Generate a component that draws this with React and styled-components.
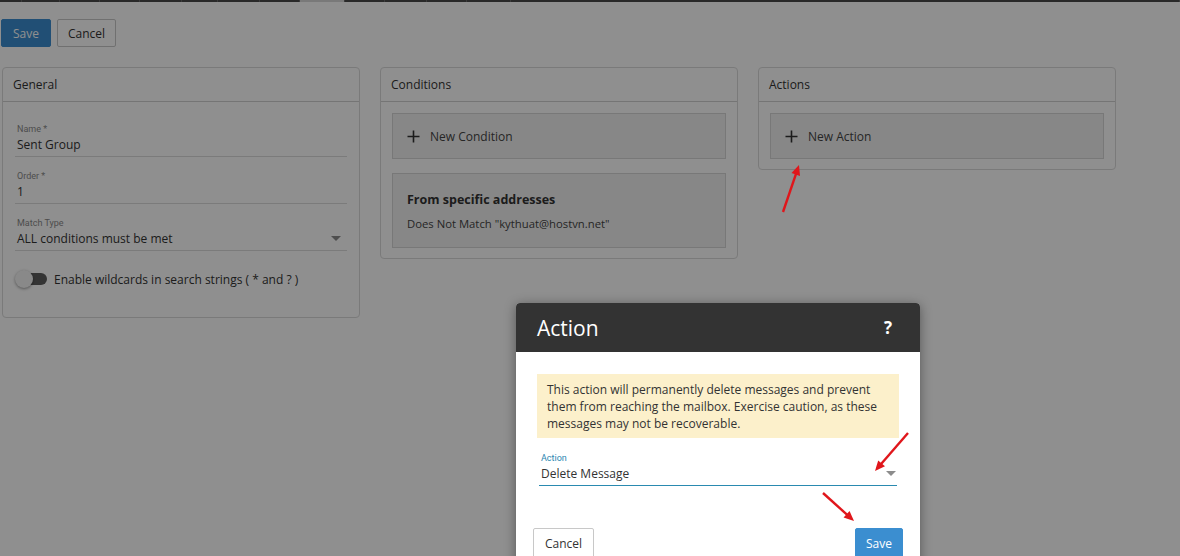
import React from "react";
import styled, { createGlobalStyle } from "styled-components";

const GlobalStyle = createGlobalStyle`
  html, body { margin: 0; padding: 0; background: #fff; }
  body { font-family: "Open Sans", "Noto Sans", sans-serif; color: #333; }
  * { box-sizing: border-box; }
`;

const Page = styled.div`
  position: relative;
  width: 1180px;
  height: 556px;
  overflow: hidden;
  background: #fff;
`;

const TabStrip = styled.div`
  display: flex;
  height: 2px;
`;

const TabSeg = styled.div`
  flex: ${(p) => (p.w ? `0 0 ${p.w}px` : "1 1 auto")};
  height: 2px;
  background: ${(p) => (p.active ? "#d8d8d8" : "#4a4a4a")};
  border-right: 1px solid #6a6a6a;
`;

const Toolbar = styled.div`
  display: flex;
  gap: 6px;
  padding: 17px 1px 0;
`;

const Button = styled.button`
  height: ${(p) => p.h || 28}px;
  padding: 0 ${(p) => p.px || 10}px;
  font-family: inherit;
  font-size: 12px;
  border-radius: 2px;
  cursor: pointer;
  border: 1px solid ${(p) => (p.primary ? "#3b8ed0" : "#c8c8c8")};
  background: ${(p) => (p.primary ? "#3b8ed0" : "#fff")};
  color: ${(p) => (p.primary ? "#fff" : "#333")};
`;

const PanelRow = styled.div`
  display: flex;
  align-items: flex-start;
  gap: 20px;
  padding: 20px 2px 0;
`;

const Panel = styled.section`
  width: 358px;
  border: 1px solid #dadada;
  border-radius: 4px;
  background: #fff;
`;

const PanelHeader = styled.div`
  height: 34px;
  display: flex;
  align-items: center;
  padding: 0 10px;
  border-bottom: 1px solid #d0d0d0;
  font-size: 12px;
  color: #333;
`;

const GeneralBody = styled.div`
  padding: 21px 12px 28px 12px;
`;

const Field = styled.div`
  display: flex;
  flex-direction: column;
  margin: ${(p) => p.m || "0 0 13px"};
  padding: 0 2px 2px;
  border-bottom: 1px solid ${(p) => (p.accent ? "#2a8ab0" : "#dcdcdc")};
  position: relative;
`;

const FieldLabel = styled.label`
  font-family: Roboto, "Open Sans", sans-serif;
  font-size: 9px;
  line-height: 13px;
  color: ${(p) => (p.accent ? "#2a86b0" : "#8a8a8a")};
`;

const FieldValue = styled.div`
  font-size: 12px;
  line-height: 18px;
  color: #333;
`;

const Caret = styled.span`
  position: absolute;
  right: ${(p) => p.r || 6}px;
  bottom: 9px;
  width: 0;
  height: 0;
  border-left: 5px solid transparent;
  border-right: 5px solid transparent;
  border-top: 5px solid #8c8c8c;
`;

const ToggleRow = styled.div`
  display: flex;
  align-items: center;
  gap: 7px;
  margin-top: 18px;
  height: 20px;
  font-size: 12px;
`;

const Track = styled.span`
  position: relative;
  width: 30px;
  height: 12px;
  margin-left: 2px;
  border-radius: 6px;
  background: #5e5e5e;
`;

const Thumb = styled.span`
  position: absolute;
  left: -2px;
  top: -3px;
  width: 18px;
  height: 18px;
  border-radius: 50%;
  background: #f4f4f4;
  box-shadow: 0 1px 3px rgba(0, 0, 0, 0.4);
`;

const ListBody = styled.div`
  display: flex;
  flex-direction: column;
  gap: 14px;
  padding: 11px 11px 10px;
`;

const AddBox = styled.div`
  height: 46px;
  display: flex;
  align-items: center;
  gap: 10px;
  padding: 0 14px;
  background: #f1f1f1;
  border: 1px solid #d6d6d6;
  font-size: 12px;
  color: #444;
`;

const PlusIcon = styled.svg`
  width: 13px;
  height: 13px;
`;

const ItemBox = styled.div`
  height: 75px;
  display: flex;
  flex-direction: column;
  justify-content: center;
  gap: 8px;
  padding: 0 14px;
  background: #f1f1f1;
  border: 1px solid #d6d6d6;
`;

const ItemTitle = styled.div`
  font-size: 12.5px;
  font-weight: 700;
  color: #333;
`;

const ItemSub = styled.div`
  font-size: 11.3px;
  color: #444;
`;

const Overlay = styled.div`
  position: absolute;
  inset: 0;
  background: rgba(0, 0, 0, 0.44);
`;

const Modal = styled.div`
  position: absolute;
  left: 516px;
  top: 303px;
  width: 404px;
  height: 300px;
  background: #fff;
  border-radius: 4px 4px 0 0;
  overflow: hidden;
  box-shadow: 0 2px 12px rgba(0, 0, 0, 0.4);
`;

const ModalHeader = styled.div`
  height: 49px;
  display: flex;
  align-items: center;
  justify-content: space-between;
  padding: 0 28px 0 21px;
  background: #333;
  color: #fff;
`;

const ModalTitle = styled.h2`
  margin: 0;
  font-size: 21px;
  font-weight: 400;
`;

const HelpMark = styled.span`
  font-size: 17px;
  font-weight: 700;
`;

const ModalBody = styled.div`
  padding: 22px 21px 0;
`;

const Warning = styled.div`
  padding: 7px 10px 6px;
  background: #fcf0cb;
  font-size: 12px;
  line-height: 17px;
  color: #333;
`;

const ModalField = styled(Field)`
  margin: 14px 2px 0;
`;

const Footer = styled.div`
  display: flex;
  justify-content: space-between;
  padding: 42px 17px 0;
`;

const Arrows = styled.svg`
  position: absolute;
  left: 0;
  top: 0;
  width: 1180px;
  height: 556px;
  pointer-events: none;
`;

const Plus = () => (
  <PlusIcon viewBox="0 0 13 13">
    <path d="M6.5 0.5v12M0.5 6.5h12" stroke="#333" strokeWidth="1.6" />
  </PlusIcon>
);

const Arrow = ({ x1, y1, x2, y2 }) => {
  const a = Math.atan2(y2 - y1, x2 - x1);
  const len = 11;
  const w = 0.42;
  const p1 = [x2 - len * Math.cos(a - w), y2 - len * Math.sin(a - w)];
  const p2 = [x2 - len * Math.cos(a + w), y2 - len * Math.sin(a + w)];
  const bx = x2 - 8 * Math.cos(a);
  const by = y2 - 8 * Math.sin(a);
  return (
    <g>
      <line x1={x1} y1={y1} x2={bx} y2={by} stroke="#e0161b" strokeWidth="2.4" />
      <polygon points={`${x2},${y2} ${p1[0]},${p1[1]} ${p2[0]},${p2[1]}`} fill="#e0161b" />
    </g>
  );
};

export default function App() {
  const tabs = [22, 38, 40, 40, 42, 36, 42, 40, 45, 40, 42, 40, 44];
  return (
    <>
      <GlobalStyle />
      <Page>
        <TabStrip>
          {tabs.map((w, i) => (
            <TabSeg key={i} w={w} active={i === 8} />
          ))}
          <TabSeg />
        </TabStrip>
        <Toolbar>
          <Button primary px={11}>Save</Button>
          <Button>Cancel</Button>
        </Toolbar>
        <PanelRow>
          <Panel>
            <PanelHeader>General</PanelHeader>
            <GeneralBody>
              <Field>
                <FieldLabel>Name *</FieldLabel>
                <FieldValue>Sent Group</FieldValue>
              </Field>
              <Field>
                <FieldLabel>Order *</FieldLabel>
                <FieldValue>1</FieldValue>
              </Field>
              <Field m="0">
                <FieldLabel>Match Type</FieldLabel>
                <FieldValue>ALL conditions must be met</FieldValue>
                <Caret />
              </Field>
              <ToggleRow>
                <Track>
                  <Thumb />
                </Track>
                Enable wildcards in search strings ( * and ? )
              </ToggleRow>
            </GeneralBody>
          </Panel>
          <Panel>
            <PanelHeader>Conditions</PanelHeader>
            <ListBody>
              <AddBox>
                <Plus />
                New Condition
              </AddBox>
              <ItemBox>
                <ItemTitle>From specific addresses</ItemTitle>
                <ItemSub>Does Not Match "kythuat@hostvn.net"</ItemSub>
              </ItemBox>
            </ListBody>
          </Panel>
          <Panel>
            <PanelHeader>Actions</PanelHeader>
            <ListBody>
              <AddBox>
                <Plus />
                New Action
              </AddBox>
            </ListBody>
          </Panel>
        </PanelRow>
        <Overlay />
        <Modal>
          <ModalHeader>
            <ModalTitle>Action</ModalTitle>
            <HelpMark>?</HelpMark>
          </ModalHeader>
          <ModalBody>
            <Warning>
              This action will permanently delete messages and prevent them from reaching the mailbox. Exercise caution, as these messages may not be recoverable.
            </Warning>
            <ModalField accent>
              <FieldLabel accent>Action</FieldLabel>
              <FieldValue>Delete Message</FieldValue>
              <Caret r={1} />
            </ModalField>
          </ModalBody>
          <Footer>
            <Button h={30} px={11}>Cancel</Button>
            <Button primary h={30} px={10}>Save</Button>
          </Footer>
        </Modal>
        <Arrows viewBox="0 0 1180 556">
          <Arrow x1={783} y1={212} x2={799} y2={165} />
          <Arrow x1={908} y1={433} x2={875} y2={471} />
          <Arrow x1={823} y1={493} x2={854} y2={521} />
        </Arrows>
      </Page>
    </>
  );
}
